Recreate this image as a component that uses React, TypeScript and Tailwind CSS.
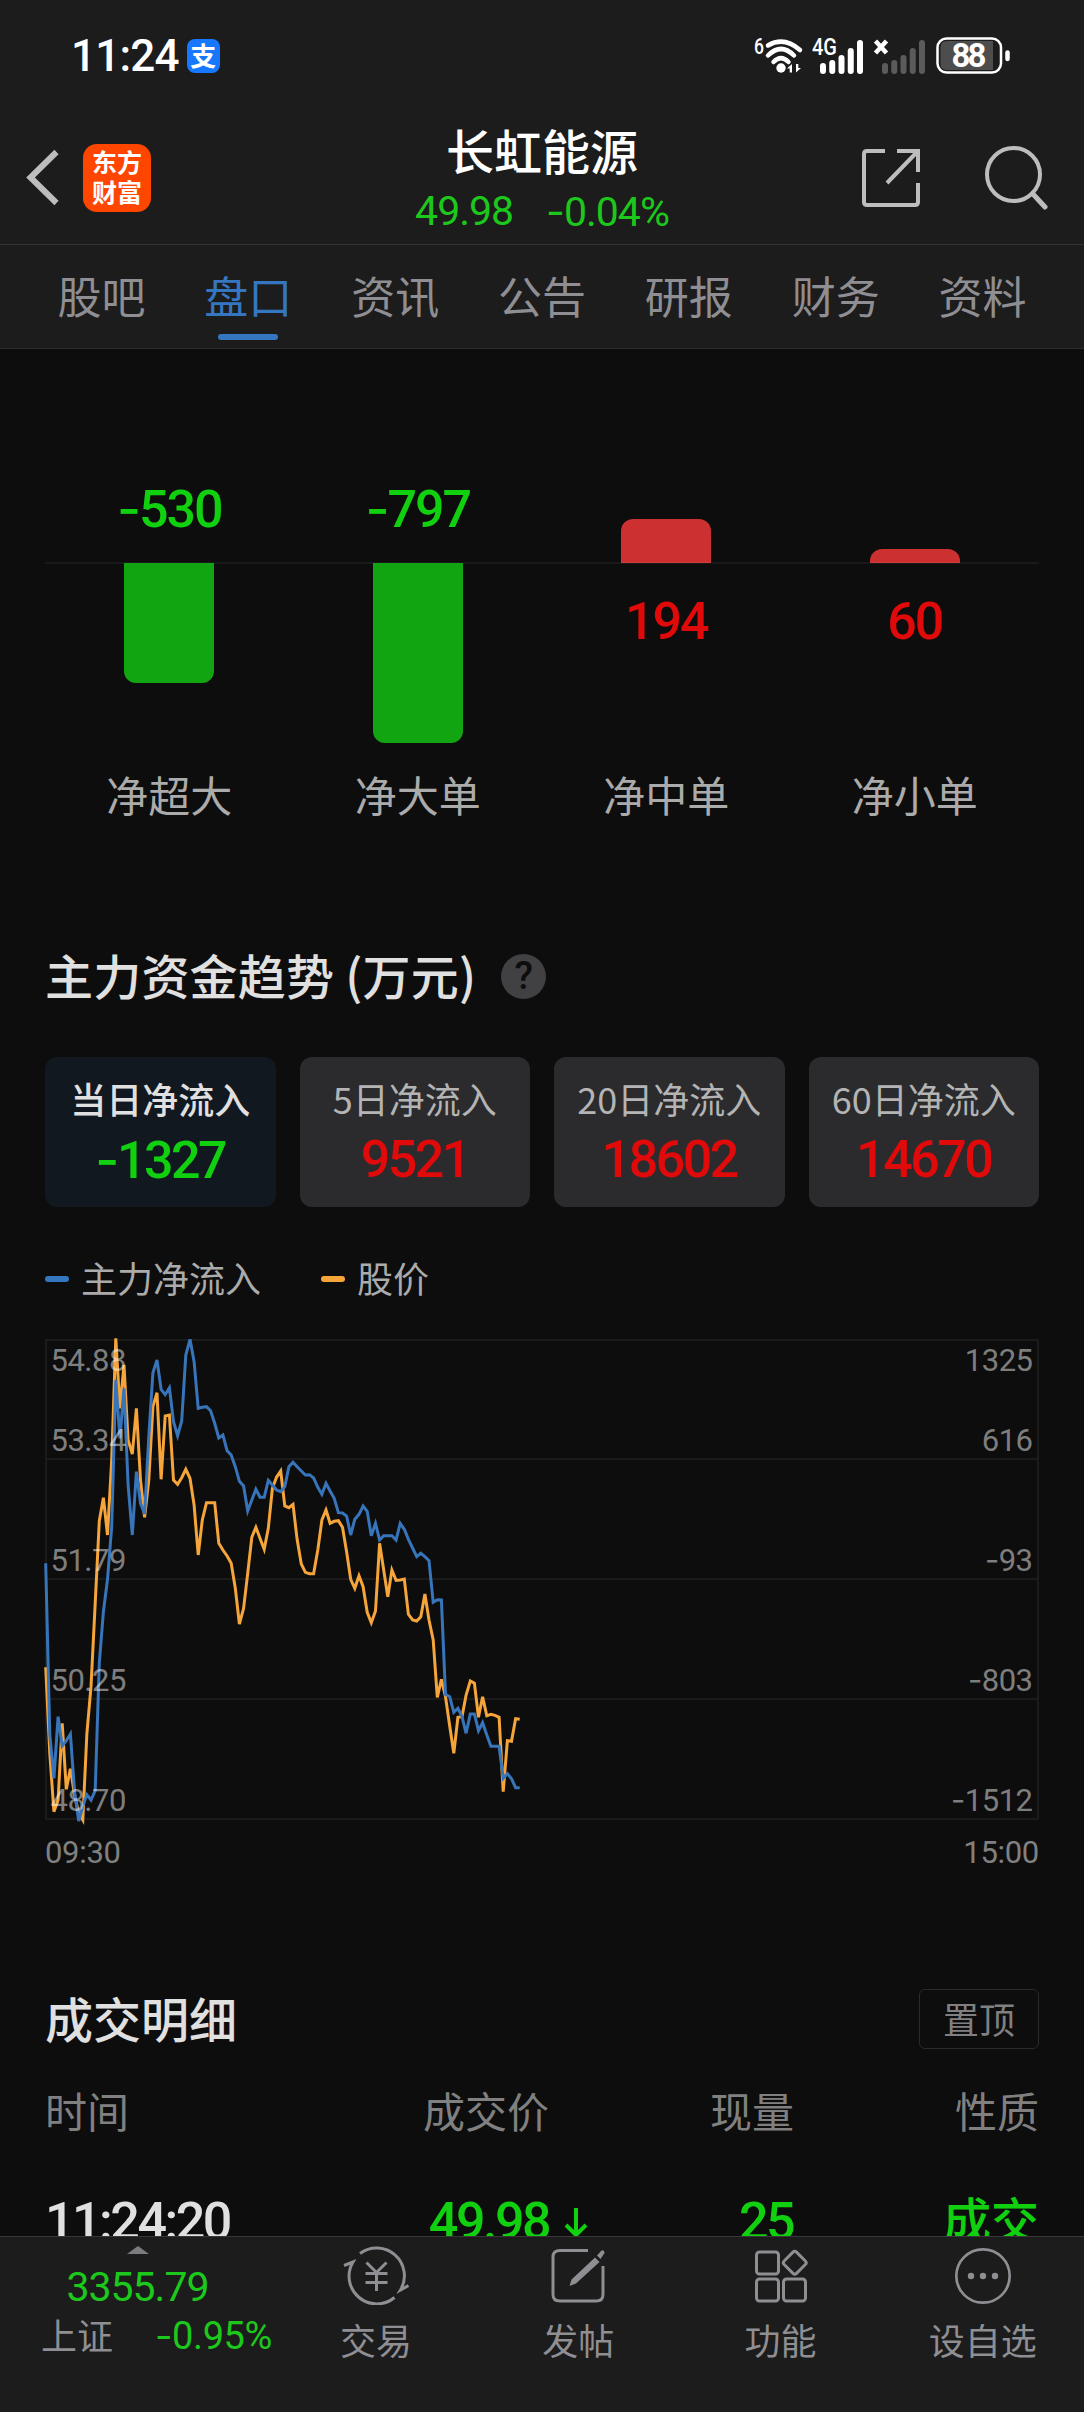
import clsx from 'clsx'

type Flow = { label: string; value: number; bar: number }

const TABS = ['股吧', '盘口', '资讯', '公告', '研报', '财务', '资料']

const FLOWS: Flow[] = [
  { label: '净超大', value: -530, bar: 120 },
  { label: '净大单', value: -797, bar: 180 },
  { label: '净中单', value: 194, bar: 44 },
  { label: '净小单', value: 60, bar: 14 },
]

const PERIODS = [
  { label: '当日净流入', value: -1327 },
  { label: '5日净流入', value: 9521 },
  { label: '20日净流入', value: 18602 },
  { label: '60日净流入', value: 14670 },
]

// one sample per minute from 09:30, measured down from the plot top, 3 units per pixel
const INFLOW = [
  730, 1245, 1375, 1190, 1278, 1262, 1242, 1415, 1503, 1458, 1424, 1440, 1412, 1030, 875, 778, 620, 180, 355, 205,
  495, 645, 455, 550, 582, 350, 158, 120, 208, 224, 203, 305, 347, 303, 105, 58, 125, 265, 262, 260,
  272, 310, 354, 345, 392, 405, 440, 484, 498, 573, 540, 508, 532, 532, 481, 495, 510, 515, 500, 440,
  427, 440, 453, 465, 464, 474, 502, 523, 490, 513, 535, 578, 579, 588, 645, 598, 583, 558, 574, 647,
  610, 660, 647, 647, 647, 660, 610, 628, 658, 684, 710, 700, 710, 722, 847, 839, 840, 1123, 1130, 1177,
  1165, 1190, 1240, 1182, 1182, 1232, 1208, 1245, 1279, 1279, 1279, 1375, 1361, 1376, 1403, 1403,
]

const PRICE = [
  1042, 1300, 1475, 1440, 1210, 1408, 1346, 1425, 1480, 1500, 1240, 1100, 850, 603, 533, 645, 420, 55, 265, 135,
  360, 402, 265, 480, 592, 480, 260, 218, 478, 288, 285, 480, 493, 473, 448, 475, 555, 705, 600, 548,
  548, 548, 670, 690, 708, 730, 805, 912, 865, 760, 652, 622, 655, 688, 625, 505, 472, 453, 558, 563,
  553, 658, 732, 757, 761, 761, 690, 600, 570, 610, 604, 602, 622, 695, 778, 805, 767, 800, 877, 908,
  873, 670, 750, 830, 750, 781, 780, 777, 883, 900, 903, 890, 822, 900, 960, 1132, 1078, 1130, 1218, 1300,
  1192, 1190, 1125, 1083, 1090, 1192, 1130, 1187, 1183, 1186, 1192, 1415, 1262, 1264, 1196, 1198,
]

const AXIS = [
  { left: '54.88', right: '1325', y: 32 },
  { left: '53.34', right: '616', y: 112 },
  { left: '51.79', right: '-93', y: 232 },
  { left: '50.25', right: '-803', y: 352 },
  { left: '48.70', right: '-1512', y: 472 },
]

const toPoints = (series: number[]) =>
  series.map((v, i) => `${(0.7 + i * 4.122).toFixed(1)},${(v / 3 - 19).toFixed(1)}`).join(' ')

// Roboto's hyphen is too short for a minus sign, so the sign comes from Inter
function Num({ value, className }: { value: string | number; className?: string }) {
  const text = String(value)
  const negative = text.startsWith('-')
  return (
    <span className={clsx("font-['Roboto',sans-serif]", className)}>
      {negative && <span className="font-['Inter',sans-serif]">-</span>}
      {negative ? text.slice(1) : text}
    </span>
  )
}

function SignalBars({ x, color }: { x: number; color: string }) {
  return (
    <g stroke={color} strokeWidth="6" strokeLinecap="round">
      {[27, 24, 19, 12, 4].map((top, i) => (
        <path key={top} d={`M${x + i * 9.25} ${top + 2}V34`} />
      ))}
    </g>
  )
}

function StatusBar() {
  return (
    <div className="flex h-28 items-center justify-between pl-[71px] pr-[74px]">
      <div className="flex items-center gap-2">
        <Num value="11:24" className="text-[44px] font-medium leading-[60px] tracking-[-0.8px] text-white" />
        <span className="flex h-[34px] w-[33px] items-center justify-center rounded-lg bg-[#1677ff] pb-0.5 text-[26px] font-bold leading-[30px] text-white">
          支
        </span>
      </div>
      <svg width="256" height="38" viewBox="0 0 256 38" className="overflow-visible font-['Roboto',sans-serif] text-white">
        <text x="0" y="17" fontSize="22" fontWeight="500" fill="currentColor" textLength="10" lengthAdjust="spacingAndGlyphs">
          6
        </text>
        <g fill="none" stroke="#fff" strokeWidth="4.500" strokeLinecap="round">
          <path d="M14 8.500Q30 -1 46 13" />
          <path d="M14 18.500Q27 5.500 40 18.500" />
          <path d="M19.500 25Q27 17.500 34.500 25" />
        </g>
        <circle cx="27" cy="31" r="4.700" fill="#fff" />
        <path d="M33 31.500l5-4.500v8.500h-2.300v-4zM47 31l-5 4.500v-8.500h2.300v4z" fill="#fff" />
        <text x="58" y="18" fontSize="24" fontWeight="500" fill="currentColor" textLength="25" lengthAdjust="spacingAndGlyphs">
          4G
        </text>
        <SignalBars x={69} color="#fff" />
        <path d="M121.500 4l11 12M132.500 4l-11 12" stroke="#fff" strokeWidth="4.500" />
        <SignalBars x={131} color="#5b5b5b" />
        <rect x="183.500" y="1.500" width="63.500" height="34" rx="9" fill="none" stroke="#fff" strokeWidth="2.500" />
        <path d="M193 4h46v29h-46q-6.500 0-6.500-6V10q0-6 6.500-6z" fill="#4d4d4d" />
        <path d="M253.500 15.500v6.500" stroke="#fff" strokeWidth="4.500" strokeLinecap="round" />
        <text x="215" y="30" fontSize="33" fontWeight="700" fill="currentColor" textAnchor="middle" textLength="35">
          88
        </text>
      </svg>
    </div>
  )
}

function Header() {
  return (
    <div className="flex h-[133px] items-start border-b border-[#333] px-6">
      <div className="flex w-[330px] items-center gap-[22px] pt-8">
        <svg width="37" height="58" viewBox="0 0 37 58" fill="none" stroke="#bdbdbd" strokeWidth="6">
          <path d="M32.500 3L6.500 28.500L32.500 54" />
        </svg>
        <div className="flex h-[68px] w-[68px] flex-col items-center justify-center rounded-[14px] bg-[#ff4600] pb-[5px] text-[25px] font-bold leading-[30px] text-white">
          <span>东方</span>
          <span>财富</span>
        </div>
      </div>
      <div className="flex flex-1 flex-col items-center pt-[9px]">
        <h1 className="text-[48px] font-medium leading-[56px] text-white">长虹能源</h1>
        <div className="mt-1 flex gap-[33px] text-[41px] leading-[60px] tracking-[-1px] text-[#1dc81d]">
          <Num value="49.98" />
          <Num value="-0.04%" />
        </div>
      </div>
      <div className="flex w-[330px] items-start justify-end gap-[62px] pr-3 pt-8">
        <svg width="60" height="60" viewBox="0 0 60 60" className="mt-1" fill="none" stroke="#bdbdbd" strokeWidth="4">
          <path d="M24 3H6Q3 3 3 6V54Q3 57 6 57H54Q57 57 57 54V35" />
          <path d="M36 3H57V24M56 4L26 35" />
        </svg>
        <svg width="65" height="68" viewBox="0 0 65 68" fill="none" stroke="#bdbdbd" strokeWidth="4">
          <circle cx="30.500" cy="30.500" r="26.500" />
          <path d="M49.500 49.500L62 63" strokeWidth="5" strokeLinecap="round" />
        </svg>
      </div>
    </div>
  )
}

function Tabs() {
  return (
    <nav className="flex h-[104px] border-b border-[#2c2c2c] px-7">
      {TABS.map((tab) => {
        const active = tab === '盘口'
        return (
          <div
            key={tab}
            className={clsx(
              'relative flex flex-1 items-center justify-center pb-1 text-[44px] leading-[60px]',
              active ? 'text-[#3576c0]' : 'text-[#8e8e93]',
            )}
          >
            {tab}
            {active && <span className="absolute bottom-2 h-1.5 w-[60px] rounded-full bg-[#3576c0]" />}
          </div>
        )
      })}
    </nav>
  )
}

function FlowBars() {
  return (
    <div className="flex px-[45px]">
      {FLOWS.map(({ label, value, bar }) => {
        const up = value > 0
        return (
          <div key={label} className="flex flex-1 flex-col">
            <div className="flex h-[214px] flex-col items-center justify-end">
              {up ? (
                <div className="w-[90px] rounded-t-xl bg-[#cc3030]" style={{ height: bar }} />
              ) : (
                <Num
                  value={value}
                  className="mb-[18px] text-[52px] font-medium leading-[70px] tracking-[-2px] text-[#10d010]"
                />
              )}
            </div>
            <div className="-my-px h-0.5 bg-white/5" />
            <div className="flex h-[199px] flex-col items-center">
              {up ? (
                <Num
                  value={value}
                  className="mt-6 text-[52px] font-medium leading-[70px] tracking-[-2px] text-[#e00a0a]"
                />
              ) : (
                <div className="w-[90px] rounded-b-xl bg-[#12a512]" style={{ height: bar }} />
              )}
            </div>
            <span className="text-center text-[42px] leading-[64px] text-[#ababab]">{label}</span>
          </div>
        )
      })}
    </div>
  )
}

function PeriodCards() {
  return (
    <div className="flex gap-6">
      {PERIODS.map(({ label, value }, i) => (
        <div
          key={label}
          className={clsx(
            'flex h-[150px] w-0 flex-1 flex-col items-center rounded-xl pt-4',
            i === 0 ? 'bg-[#111820]' : 'bg-[#2b2b2d]',
          )}
        >
          <span
            className={clsx(
              'whitespace-nowrap text-[36px] leading-[50px]',
              i === 0 ? 'font-medium text-[#e0e0e0]' : 'text-[#b4b4b4]',
            )}
          >
            {label}
          </span>
          <Num
            value={value}
            className={clsx(
              'mt-[3px] text-[52px] font-medium leading-[68px] tracking-[-2.5px]',
              value < 0 ? 'text-[#10d010]' : 'text-[#e00a0a]',
            )}
          />
        </div>
      ))}
    </div>
  )
}

function TrendChart() {
  return (
    <div>
      <svg width="994" height="486" viewBox="0 0 994 486" className="block overflow-visible">
        <g fill="none" stroke="#1b1b1b" strokeWidth="2">
          <rect x="1" y="1" width="992" height="479" />
          <path d="M0 120H994M0 240H994M0 360H994" />
        </g>
        <g fill="none" strokeWidth="3">
          <polyline points={toPoints(PRICE)} stroke="#f5a53a" />
          <polyline points={toPoints(INFLOW)} stroke="#3874ba" />
        </g>
        <g className="font-['Roboto',sans-serif]" fontSize="31" fill="#fff" fillOpacity="0.47" letterSpacing="-0.5">
          {AXIS.map(({ left, right, y }) => (
            <g key={left}>
              <text x="5.500" y={y}>{left}</text>
              <text x="987.500" y={y} textAnchor="end">
                {right.startsWith('-') && <tspan className="font-['Inter',sans-serif]">-</tspan>}
                {right.replace('-', '')}
              </text>
            </g>
          ))}
        </g>
      </svg>
      <div className="flex justify-between text-[31px] leading-[56px] tracking-[-0.3px] text-[#808080]">
        <Num value="09:30" />
        <Num value="15:00" />
      </div>
    </div>
  )
}

function FundTrend() {
  return (
    <section className="flex flex-col px-[45px] pt-[115px]">
      <div className="flex h-[70px] items-center gap-[25px]">
        <h2 className="pb-[5px] text-[48px] font-medium leading-[60px] tracking-[0.2px] text-[#e0e0e0]">
          主力资金趋势 (万元)
        </h2>
        <span className="flex h-[45px] w-[45px] items-center justify-center rounded-full bg-[#414144] font-['Roboto',sans-serif] text-[38px] font-medium leading-[45px] text-[#0d0d0d]">
          ?
        </span>
      </div>
      <div className="mt-[46px]">
        <PeriodCards />
      </div>
      <div className="mb-[32px] mt-[44px] flex h-14 items-center text-[36px] leading-[50px] text-[#ababab]">
        <span className="mr-3 h-1.5 w-6 rounded-sm bg-[#3576c0]" />
        <span className="pb-1">主力净流入</span>
        <span className="ml-[60px] mr-3 h-1.5 w-6 rounded-sm bg-[#f5a53a]" />
        <span className="pb-1">股价</span>
      </div>
      <TrendChart />
    </section>
  )
}

function Trades() {
  return (
    <section className="px-[45px] pt-[108px]">
      <div className="flex h-[60px] items-center justify-between">
        <h2 className="pb-[5px] text-[48px] font-medium leading-[60px] text-[#e0e0e0]">成交明细</h2>
        <span className="flex h-[60px] w-[120px] items-center justify-center rounded-md border border-[#2a2a2a] pb-[3px] text-[36px] leading-[50px] text-[#808080]">
          置顶
        </span>
      </div>
      <div className="mt-[29px] flex text-right text-[42px] leading-[64px] text-[#808080]">
        <span className="w-[260px] text-left">时间</span>
        <span className="w-[244px]">成交价</span>
        <span className="w-[245px]">现量</span>
        <span className="flex-1">性质</span>
      </div>
      <div className="mt-[45px] flex text-right text-[52px] font-medium leading-[70px] tracking-[-2.5px] text-[#10d010]">
        <Num value="11:24:20" className="w-[260px] text-left text-[#e0e0e0]" />
        <Num value="49.98" className="w-[244px]" />
        <svg width="26" height="32" viewBox="0 0 26 32" className="ml-[14px] mt-5" fill="none" stroke="#10d010" strokeWidth="4">
          <path d="M13 1V27M3 18L13 28L23 18" />
        </svg>
        <Num value="25" className="w-[204px]" />
        <span className="-mt-[5px] flex-1 text-[48px] tracking-normal">成交</span>
      </div>
    </section>
  )
}

function TradeIcon() {
  return (
    <svg width="66" height="60" viewBox="0 0 66 60" fill="none" stroke="#8e8e93" strokeWidth="3">
      <path d="M17 8.500A27.800 27.800 0 0 1 57.500 45L65.500 40.500" />
      <path d="M51.500 52.500A27.700 27.700 0 0 1 10 17L1 20.500" />
      <path d="M23.500 17.500L33.500 27.500L43.500 17.500M22.500 28.500H44.500M22.500 37.500H44.500M33.500 27V46" />
    </svg>
  )
}

function PostIcon() {
  return (
    <svg width="56" height="60" viewBox="0 0 56 60" fill="none" stroke="#8e8e93" strokeWidth="3">
      <path d="M38 5.500H10Q3 5.500 3 12V49.500Q3 56 10 56H46Q53 56 53 49.500V21" />
      <path d="M45 12.500L49.500 17L26 38.500L19.500 41L21.500 34.500ZM47 10.500L51.500 5.500Q54.500 4.500 54.500 8L50.500 14Z" fill="#8e8e93" stroke="none" />
    </svg>
  )
}

function GridIcon() {
  return (
    <svg width="56" height="60" viewBox="0 0 56 60" fill="none" stroke="#8e8e93" strokeWidth="3">
      <rect x="3.500" y="7" width="22" height="22" rx="3" />
      <rect x="3.500" y="34" width="22" height="22" rx="3" />
      <rect x="30.500" y="34" width="22" height="22" rx="3" />
      <rect x="33" y="9" width="17.500" height="17.500" rx="2.500" transform="rotate(45 41.750 17.750)" />
    </svg>
  )
}

function MoreIcon() {
  return (
    <svg width="60" height="60" viewBox="0 0 60 60" fill="none" stroke="#8e8e93" strokeWidth="2.700">
      <circle cx="30" cy="31" r="26.700" />
      <g fill="#8e8e93" stroke="none">
        <circle cx="18" cy="31" r="3.200" />
        <circle cx="30" cy="31" r="3.200" />
        <circle cx="42" cy="31" r="3.200" />
      </g>
    </svg>
  )
}

const ACTIONS = [
  { label: '交易', icon: <TradeIcon /> },
  { label: '发帖', icon: <PostIcon /> },
  { label: '功能', icon: <GridIcon /> },
  { label: '设自选', icon: <MoreIcon /> },
]

function BottomBar() {
  return (
    <footer className="flex h-44 shrink-0 border-t border-[#383838] bg-[#1c1c1c]">
      <div className="flex w-[275px] flex-col items-center pt-[9px]">
        <svg width="22" height="8" viewBox="0 0 22 8">
          <path d="M11 0L22 8H0Z" fill="#7c7c80" />
        </svg>
        <Num value="3355.79" className="mt-2 text-[41px] leading-[50px] tracking-[-1px] text-[#1dc81d]" />
        <div className="flex w-full items-start justify-between pl-[41px] pr-[3px] text-[36px] leading-[46px] text-[#8e8e93]">
          <span className="-mt-px">上证</span>
          <Num value="-0.95%" className="text-[38px] tracking-[-0.4px] text-[#1dc81d]" />
        </div>
      </div>
      {ACTIONS.map(({ label, icon }) => (
        <div key={label} className="flex flex-1 flex-col items-center pt-2">
          {icon}
          <span className="mt-[9px] text-[36px] leading-[50px] text-[#8e8e93]">{label}</span>
        </div>
      ))}
    </footer>
  )
}

export default function App() {
  return (
    <div
      lang="zh-CN"
      className="flex h-[2412px] w-[1084px] flex-col overflow-hidden bg-[#0d0d0d] font-['Noto_Sans_CJK_SC',sans-serif]"
    >
      <header className="shrink-0 bg-[#1c1c1c]">
        <StatusBar />
        <Header />
        <Tabs />
      </header>
      <main className="min-h-0 flex-1 overflow-hidden">
        <FlowBars />
        <FundTrend />
        <Trades />
      </main>
      <BottomBar />
    </div>
  )
}
